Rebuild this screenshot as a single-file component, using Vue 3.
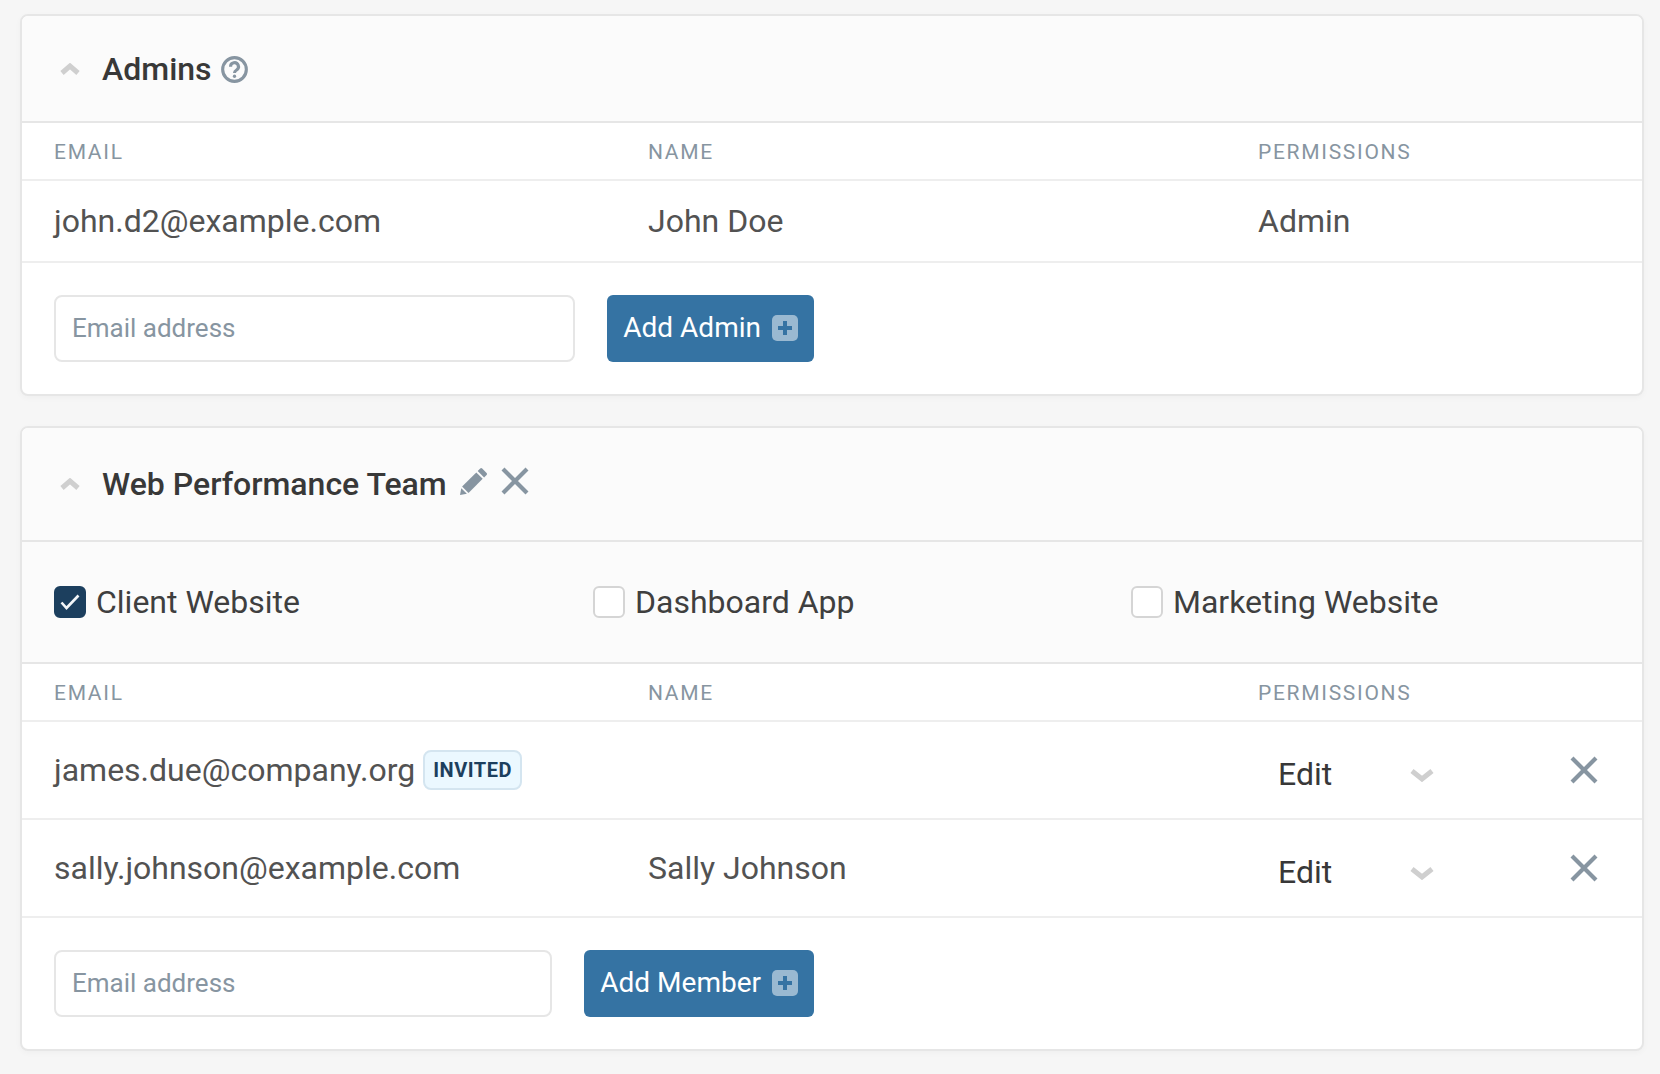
<template>
  <div class="page">
    <section class="card">
      <header class="card-head">
        <svg class="caret" viewBox="0 0 20 12"><path d="M2 10 L10 3 L18 10" /></svg>
        <h2 class="card-title">Admins</h2>
        <svg class="help" viewBox="0 0 26 26">
          <circle cx="13" cy="13" r="11.4" />
          <path d="M9.2 10.400a3.800 3.800 0 1 1 5.800 3.100c-1.300.8-2 1.400-2 2.900" />
          <circle class="dot" cx="13" cy="19.500" r="1.600" />
        </svg>
      </header>

      <div class="grid-row cols">
        <span>EMAIL</span><span>NAME</span><span>PERMISSIONS</span>
      </div>
      <div class="grid-row row admin-row">
        <span>john.d2@example.com</span><span>John Doe</span><span>Admin</span>
      </div>

      <form class="add-form" @submit.prevent>
        <input class="email" type="text" placeholder="Email address" />
        <button class="add-btn">
          Add Admin
          <svg class="plus" viewBox="0 0 26 26">
            <rect width="26" height="26" rx="5" />
            <path d="M13 6v14M6 13h14" />
          </svg>
        </button>
      </form>
    </section>

    <section class="card">
      <header class="card-head team-head">
        <svg class="caret" viewBox="0 0 20 12"><path d="M2 10 L10 3 L18 10" /></svg>
        <h2 class="card-title">Web Performance Team</h2>
        <svg class="pencil" viewBox="0 0 28 28">
          <path d="M22.200 1.500 26.600 5.900a1.400 1.400 0 0 1 0 2L24.100 10.400 17.700 4 20.200 1.500a1.400 1.400 0 0 1 2 0Z" />
          <path d="M16.300 5.400 22.700 11.800 8.500 26 2.100 19.600Z" />
          <path d="M1.300 21.200 6.900 26.800 0 28Z" />
        </svg>
        <svg class="cross" viewBox="0 0 28 28"><path d="M2 2 26 26M26 2 2 26" /></svg>
      </header>

      <div class="sites">
        <label v-for="site in sites" :key="site.name" class="site">
          <span class="check" :class="{ checked: site.checked }">
            <svg v-if="site.checked" viewBox="0 0 32 32"><path d="M7.500 16.500 12.500 22 24.500 9.500" /></svg>
          </span>
          {{ site.name }}
        </label>
      </div>

      <div class="grid-row cols">
        <span>EMAIL</span><span>NAME</span><span>PERMISSIONS</span>
      </div>
      <div v-for="member in members" :key="member.email" class="grid-row row member-row">
        <span class="member-email">
          {{ member.email }}
          <span v-if="member.invited" class="badge">INVITED</span>
        </span>
        <span>{{ member.name }}</span>
        <span class="perm">
          <span class="select">
            Edit
            <svg class="select-arrow" viewBox="0 0 24 14"><path d="M2 3 12 11 22 3" /></svg>
          </span>
          <svg class="cross remove" viewBox="0 0 28 28"><path d="M2 2 26 26M26 2 2 26" /></svg>
        </span>
      </div>

      <form class="add-form" @submit.prevent>
        <input class="email" type="text" placeholder="Email address" />
        <button class="add-btn">
          Add Member
          <svg class="plus" viewBox="0 0 26 26">
            <rect width="26" height="26" rx="5" />
            <path d="M13 6v14M6 13h14" />
          </svg>
        </button>
      </form>
    </section>
  </div>
</template>

<script setup>
const sites = [
  { name: 'Client Website', checked: true },
  { name: 'Dashboard App', checked: false },
  { name: 'Marketing Website', checked: false }
];

const members = [
  { email: 'james.due@company.org', name: '', invited: true },
  { email: 'sally.johnson@example.com', name: 'Sally Johnson', invited: false }
];
</script>

<style>
html, body {
  margin: 0;
  background: #f6f6f6;
}
</style>

<style scoped>
.page {
  box-sizing: border-box;
  height: 1074px;
  padding: 14px 16px 0 20px;
  display: flex;
  flex-direction: column;
  gap: 30px;
  font-family: Roboto, "Liberation Sans", sans-serif;
  color: #525252;
  overflow: hidden;
}

.card {
  background: #fff;
  border: 2px solid #e6e6e6;
  border-radius: 8px;
  box-shadow: 0 2px 6px rgba(0, 0, 0, 0.03);
  overflow: hidden;
}

.card-head {
  box-sizing: border-box;
  height: 107px;
  padding-left: 38px;
  display: flex;
  align-items: center;
  background: #fbfbfb;
  border-bottom: 2px solid #e6e6e6;
}

.team-head {
  height: 114px;
}

.caret {
  width: 20px;
  height: 12px;
  margin-right: 22px;
  flex: none;
}

.caret path {
  fill: none;
  stroke: #cfcfcf;
  stroke-width: 5;
}

.card-title {
  margin: 0;
  font-size: 32px;
  font-weight: 500;
  color: #383838;
}

.help {
  width: 27px;
  height: 27px;
  margin: 2px 0 0 9px;
}

.help circle,
.help path {
  fill: none;
  stroke: #8795a1;
  stroke-width: 3;
}

.help .dot {
  fill: #8795a1;
  stroke: none;
}

.pencil {
  width: 28px;
  height: 28px;
  margin: 0 0 7px 13px;
  fill: #8795a1;
}

.cross {
  width: 28px;
  height: 28px;
  margin-left: 13px;
  flex: none;
}

.team-head .cross {
  margin-bottom: 7px;
}

.cross path {
  fill: none;
  stroke: #8795a1;
  stroke-width: 4.2;
}

.sites {
  box-sizing: border-box;
  height: 122px;
  padding-left: 32px;
  display: grid;
  grid-template-columns: 539px 538px 1fr;
  align-items: center;
  background: #fbfbfb;
  border-bottom: 2px solid #e6e6e6;
}

.site {
  display: flex;
  align-items: center;
  gap: 10px;
  font-size: 32px;
  color: #3f3f3f;
}

.check {
  box-sizing: border-box;
  width: 32px;
  height: 32px;
  flex: none;
  background: #fff;
  border: 2px solid #d5d5d5;
  border-radius: 6px;
}

.check.checked {
  background: #1c3f5e;
  border-color: #1c3f5e;
}

.check svg {
  display: block;
  width: 32px;
  height: 32px;
  margin: -2px;
}

.check path {
  fill: none;
  stroke: #f3f6f8;
  stroke-width: 2.6;
}

.grid-row {
  display: grid;
  grid-template-columns: 594px 610px 1fr;
  align-items: center;
  padding-left: 32px;
  border-bottom: 2px solid #eee;
}

.cols {
  box-sizing: border-box;
  height: 58px;
  padding-top: 1px;
  font-size: 21px;
  letter-spacing: 1.7px;
  color: #8795a1;
}

.row {
  box-sizing: border-box;
  font-size: 32px;
}

.admin-row {
  height: 82px;
}

.member-row {
  height: 98px;
}

.member-email {
  display: flex;
  align-items: center;
  gap: 8px;
}

.badge {
  box-sizing: border-box;
  height: 40px;
  padding: 0 8px;
  display: inline-flex;
  align-items: center;
  background: #ebf8ff;
  border: 2px solid #d4e5f0;
  border-radius: 8px;
  font-size: 20px;
  font-weight: 700;
  letter-spacing: 0.5px;
  color: #1c3f5e;
}

.perm {
  display: flex;
  align-items: center;
  height: 100%;
}

.select {
  position: relative;
  width: 186px;
  padding-left: 20px;
  padding-top: 8px;
  box-sizing: border-box;
  color: #383838;
}

.select-arrow {
  position: absolute;
  left: 152px;
  top: 21px;
  width: 24px;
  height: 14px;
}

.select-arrow path {
  fill: none;
  stroke: #cfcfcf;
  stroke-width: 5;
}

.remove {
  margin-left: 126px;
}

.add-form {
  box-sizing: border-box;
  height: 131px;
  width: 792px;
  padding-left: 32px;
  display: flex;
  align-items: center;
  gap: 32px;
}

.email {
  box-sizing: border-box;
  flex: 1;
  min-width: 0;
  height: 67px;
  padding: 0 16px 2px;
  background: #fff;
  border: 2px solid #e6e6e6;
  border-radius: 8px;
  font-family: inherit;
  font-size: 26px;
  color: #4f4f4f;
  outline: none;
}

.email::placeholder {
  color: #8795a1;
  opacity: 1;
}

.add-btn {
  height: 67px;
  padding: 0 16px 2px;
  display: flex;
  align-items: center;
  gap: 11px;
  flex: none;
  background: #3573a3;
  border: none;
  border-radius: 6px;
  font-family: inherit;
  font-size: 28px;
  color: #fff;
}

.plus {
  width: 26px;
  height: 26px;
}

.plus rect {
  fill: #9ab9d1;
}

.plus path {
  fill: none;
  stroke: #3573a3;
  stroke-width: 4;
}
</style>
